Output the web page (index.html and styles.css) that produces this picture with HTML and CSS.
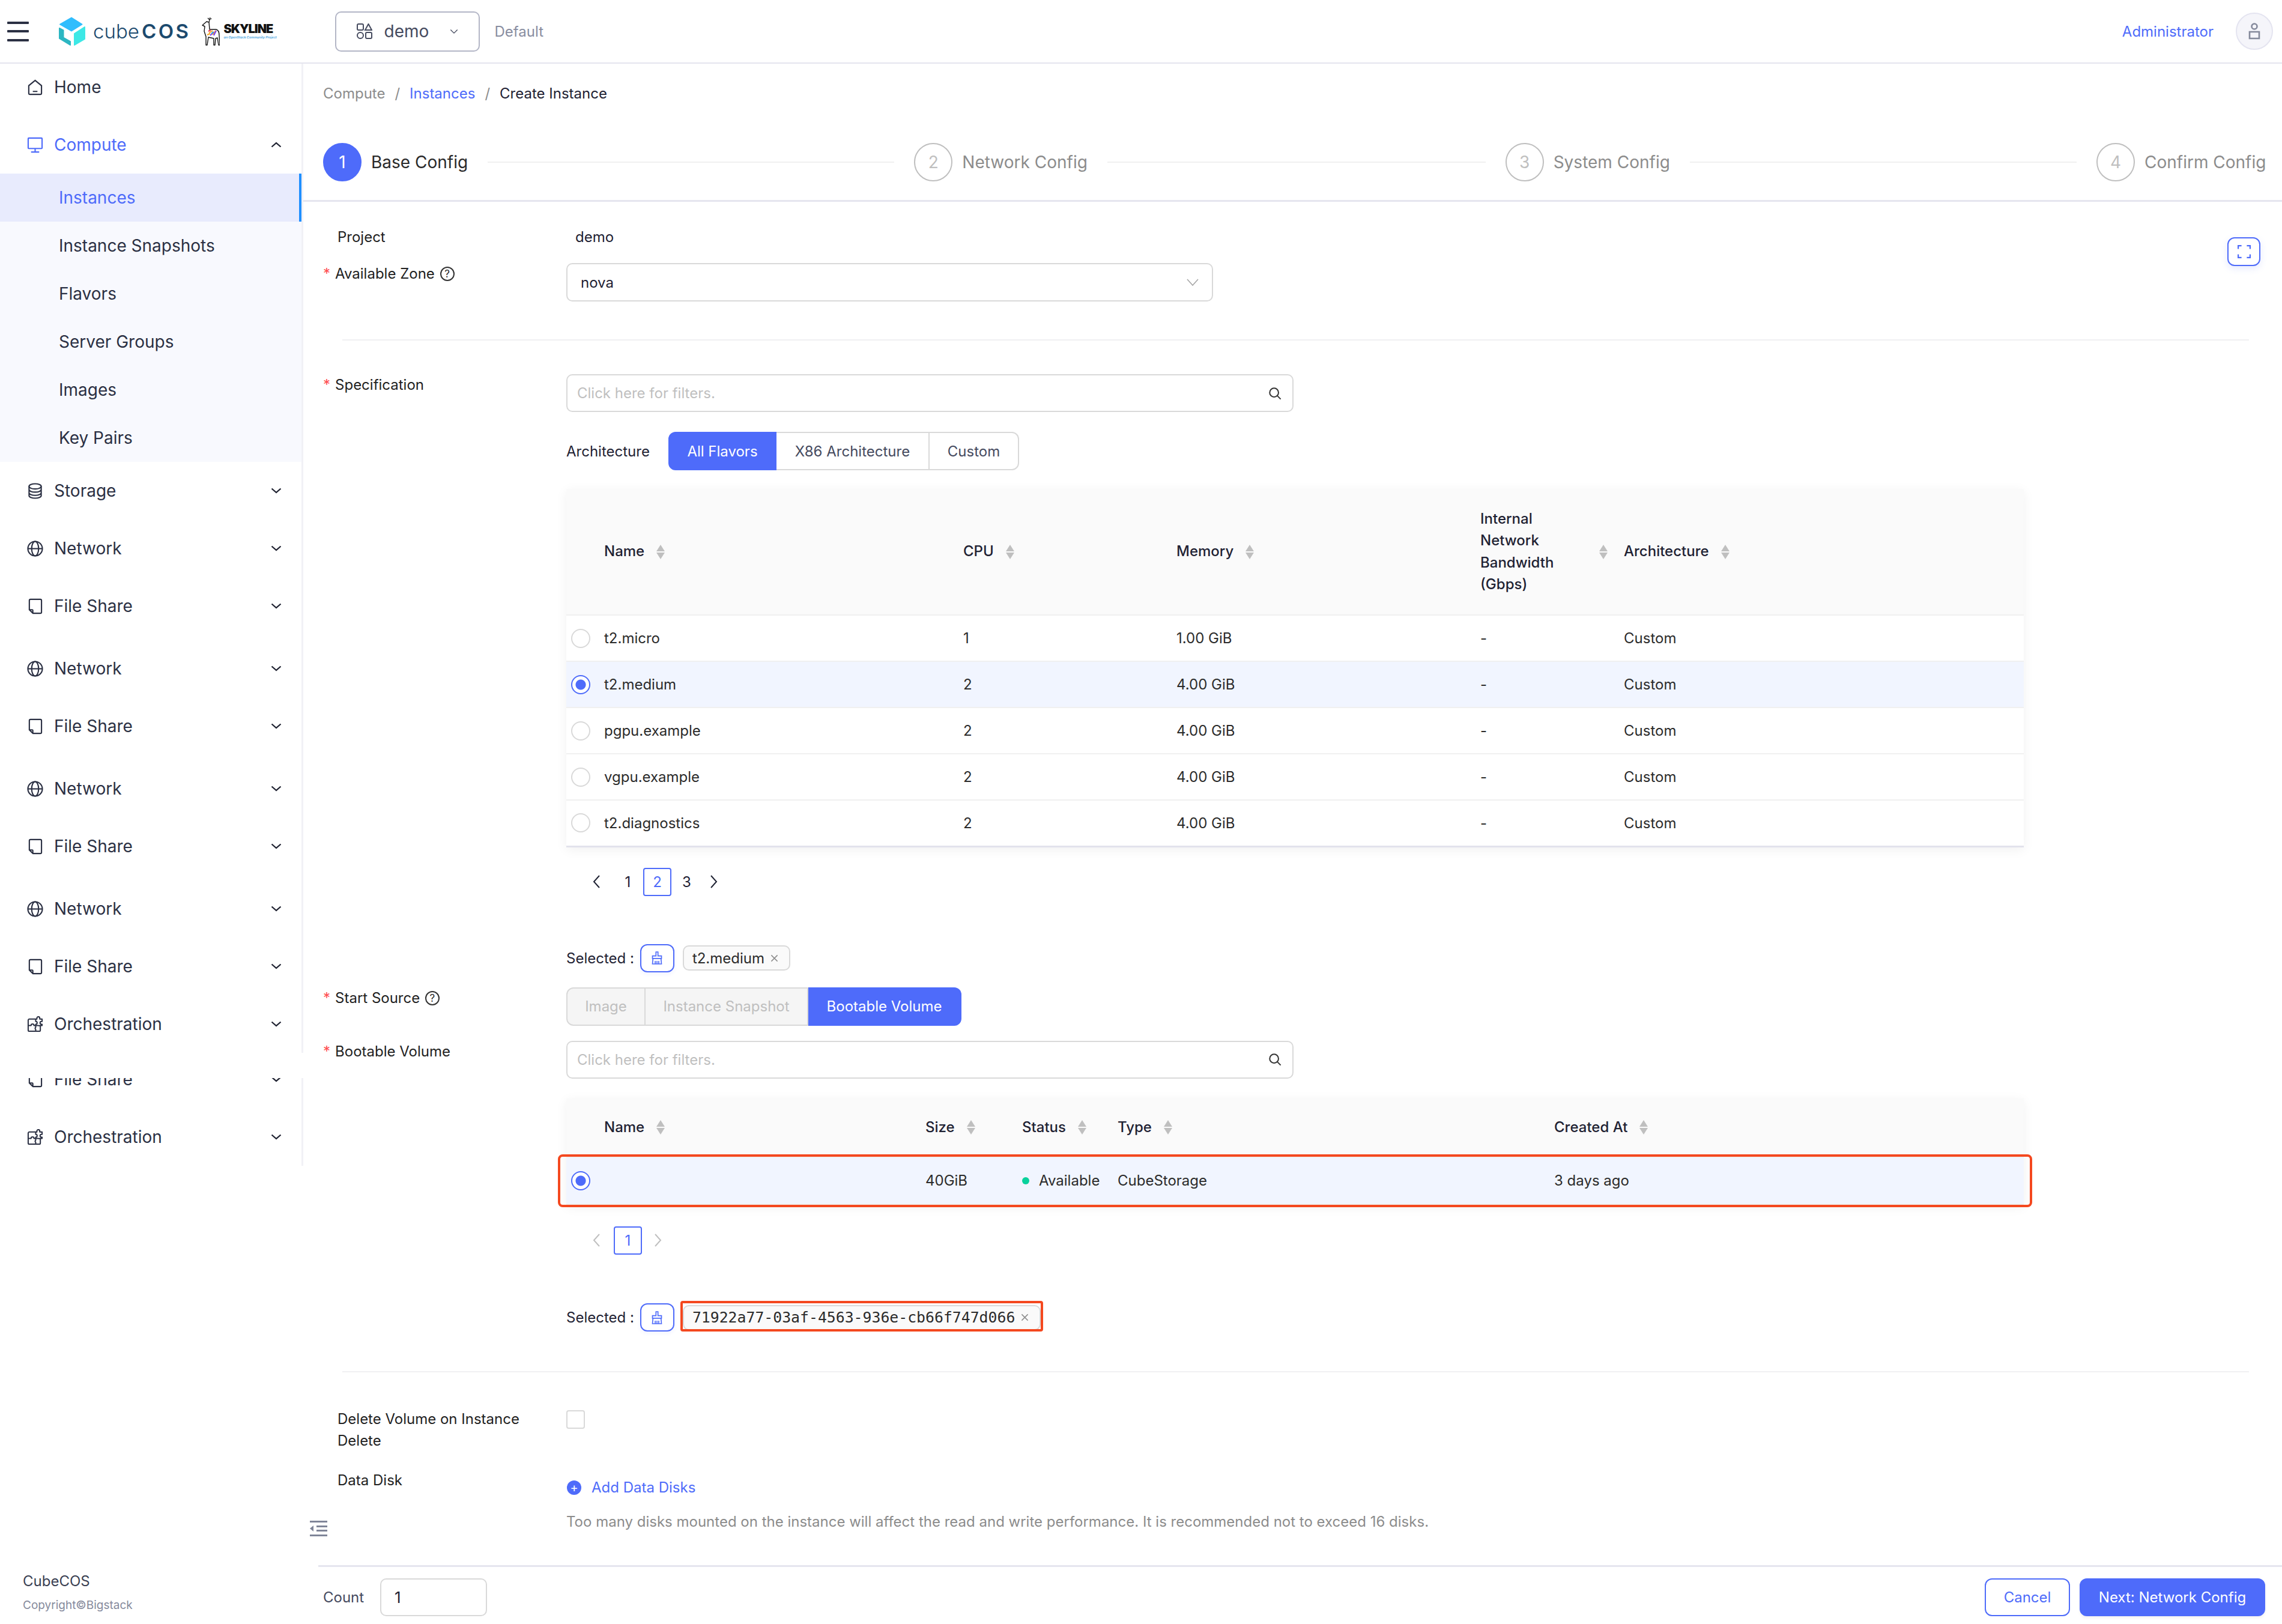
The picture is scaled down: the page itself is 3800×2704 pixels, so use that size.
FILE: index.html
```html
<!DOCTYPE html>
<html lang="en">
<head>
    <meta charset="UTF-8">
    <title>Create Instance</title>
    <link rel="stylesheet" href="styles.css">
</head>
<body>
    <svg class="sprites" width="0" height="0">
        <symbol id="i-chev" viewBox="0 0 18 10"><path d="M1.5 1.5 9 8l7.5-6.500" fill="none" stroke="currentColor" stroke-width="2.300"/></symbol>
        <symbol id="i-network" viewBox="0 0 28 28"><g fill="none" stroke="currentColor" stroke-width="2.200"><circle cx="14" cy="14" r="12.500"/><ellipse cx="14" cy="14" rx="6" ry="12.500"/><path d="M1.500 14h25"/></g></symbol>
        <symbol id="i-file" viewBox="0 0 26 28"><path d="M5 2h17a2 2 0 0 1 2 2v20a2 2 0 0 1-2 2H9l-6-6V4a2 2 0 0 1 2-2zM3 20h5a1 1 0 0 1 1 1v5" fill="none" stroke="currentColor" stroke-width="2.200" stroke-linejoin="round"/></symbol>
        <symbol id="i-storage" viewBox="0 0 26 28"><g fill="none" stroke="currentColor" stroke-width="2.200"><ellipse cx="13" cy="6" rx="10.500" ry="4.500"/><path d="M2.500 6v16c0 2.500 4.500 4.500 10.500 4.500s10.500-2 10.500-4.500V6M2.500 11.500c0 2.500 4.500 4.500 10.500 4.500s10.500-2 10.500-4.500M2.500 17c0 2.500 4.500 4.500 10.500 4.500s10.500-2 10.500-4.500"/></g></symbol>
        <symbol id="i-orch" viewBox="0 0 28 28"><path d="M15 5H4a2 2 0 0 0-2 2v17a2 2 0 0 0 2 2h17a2 2 0 0 0 2-2v-8M15 5h2V3.500a2.500 2.500 0 0 1 5 0V5h4v4h-1a2.500 2.500 0 0 0 0 5h1v2h-3l-3 .500M15 5v4a2.500 2.500 0 0 1 0 5v2h-3a2.500 2.500 0 0 0-5 0H2M15 16h5M15 16v3a2.500 2.500 0 0 0 0 4v3" fill="none" stroke="currentColor" stroke-width="2.100" stroke-linejoin="round"/></symbol>
        <symbol id="i-search" viewBox="0 0 24 24"><g fill="none" stroke="currentColor" stroke-width="2.200"><circle cx="10.500" cy="10.500" r="8"/><path d="m16.500 16.500 6 6"/></g></symbol>
        <symbol id="i-broom" viewBox="0 0 24 28"><path d="M10 2h4v8h7v5H3v-5h7zM4 15h16l1 11H3zM8.500 20v6M12 20v6M15.500 20v6" fill="none" stroke="currentColor" stroke-width="2"/></symbol>
        <symbol id="i-x" viewBox="0 0 14 14"><path d="m1.500 1.500 11 11m0-11-11 11" fill="none" stroke="currentColor" stroke-width="1.600"/></symbol>
    </svg>

    <header class="topbar">
        <div class="burger"><span></span><span></span><span></span></div>
        <svg class="logo-cube" viewBox="0 0 44 48">
            <g stroke-width="2" stroke-linejoin="round">
                <path d="M21 1.500 38.500 12.500 21 23.500 2 12.500z" fill="#31bdfd" stroke="#31bdfd"/>
                <path d="M1 19l6.500 3.500v12L19 41v6L1 36z" fill="#2cb6c2" stroke="#2cb6c2"/>
                <path d="M43 17 26 28v19l17-10z" fill="#3de8e6" stroke="#3de8e6"/>
            </g>
        </svg>
        <div class="logo-text">cube<b>COS</b></div>
        <svg class="logo-deer" viewBox="0 0 30 48">
            <path d="M12 9 14 1M13 5l-3-3M13.500 4l3-1" fill="none" stroke="#111" stroke-width="1.200"/>
            <path d="M1 14 8 8 12 9 13 21 24 21C28 22 29 26 29 31L30 47H28L26 35 23 36 22 47H20L20 36 11 34 9 47H7L7 33 4 24 5 16z" fill="#fff" stroke="#111" stroke-width="1.400" stroke-linejoin="round"/>
            <path d="M9 30l5-2M12 27l6-4M18 30l5-7" fill="none" stroke="#f5a623" stroke-width="2"/>
            <path d="M14 31l6-6M20 31l4-8" fill="none" stroke="#7b3ff2" stroke-width="2"/>
            <path d="M11 24l4-2" fill="none" stroke="#e8334a" stroke-width="2"/>
            <path d="M16 28l3-3" fill="none" stroke="#2ab5e8" stroke-width="2"/>
        </svg>
        <div class="logo-skyline">
            <div class="skyline-name">SKYLINE</div>
            <div class="skyline-sub">an OpenStack Community Project</div>
        </div>
        <div class="project-select">
            <svg class="project-icon" viewBox="0 0 26 26"><g fill="none" stroke="currentColor" stroke-width="2"><rect x="1" y="1" width="10" height="10" rx="2"/><path d="M19.500 1 25 11H14z"/><circle cx="6" cy="20" r="5"/><rect x="15" y="15" width="10" height="10" rx="2"/></g></svg>
            <span>demo</span>
            <svg class="project-chev" viewBox="0 0 16 10"><path d="M1.500 1.500 8 8l6.500-6.500" fill="none" stroke="currentColor" stroke-width="1.500"/></svg>
        </div>
        <span class="project-domain">Default</span>
        <a class="user-name">Administrator</a>
        <div class="avatar">
            <svg viewBox="0 0 24 28"><g fill="none" stroke="currentColor" stroke-width="2.600"><circle cx="12" cy="6" r="4.500"/><path d="M4 15h16v11H4z"/></g></svg>
        </div>
    </header>

    <div class="layout">
        <aside class="sidebar">
            <nav class="nav-part">
                <div class="nav-item home">
                    <svg class="nav-icon" viewBox="0 0 28 28"><path d="M14 2 25 11v13a2 2 0 0 1-2 2H5a2 2 0 0 1-2-2V11zM10 21h8" fill="none" stroke="currentColor" stroke-width="2.200"/></svg>
                    <span>Home</span>
                </div>
                <div class="nav-item active">
                    <svg class="nav-icon" viewBox="0 0 28 28"><path d="M3 2h22a1 1 0 0 1 1 1v16a1 1 0 0 1-1 1H3a1 1 0 0 1-1-1V3a1 1 0 0 1 1-1zM14 20v6M7 26h14" fill="none" stroke="currentColor" stroke-width="2.200"/></svg>
                    <span>Compute</span>
                    <svg class="nav-chev up"><use href="#i-chev"/></svg>
                </div>
                <ul class="sub-list">
                    <li class="sub-item current">Instances</li>
                    <li class="sub-item">Instance Snapshots</li>
                    <li class="sub-item">Flavors</li>
                    <li class="sub-item">Server Groups</li>
                    <li class="sub-item">Images</li>
                    <li class="sub-item">Key Pairs</li>
                </ul>
                <div class="nav-item"><svg class="nav-icon"><use href="#i-storage"/></svg><span>Storage</span><svg class="nav-chev"><use href="#i-chev"/></svg></div>
                <div class="nav-item"><svg class="nav-icon"><use href="#i-network"/></svg><span>Network</span><svg class="nav-chev"><use href="#i-chev"/></svg></div>
                <div class="nav-item"><svg class="nav-icon"><use href="#i-file"/></svg><span>File Share</span><svg class="nav-chev"><use href="#i-chev"/></svg></div>
                <div class="nav-item group"><svg class="nav-icon"><use href="#i-network"/></svg><span>Network</span><svg class="nav-chev"><use href="#i-chev"/></svg></div>
                <div class="nav-item"><svg class="nav-icon"><use href="#i-file"/></svg><span>File Share</span><svg class="nav-chev"><use href="#i-chev"/></svg></div>
                <div class="nav-item group"><svg class="nav-icon"><use href="#i-network"/></svg><span>Network</span><svg class="nav-chev"><use href="#i-chev"/></svg></div>
                <div class="nav-item"><svg class="nav-icon"><use href="#i-file"/></svg><span>File Share</span><svg class="nav-chev"><use href="#i-chev"/></svg></div>
                <div class="nav-item group"><svg class="nav-icon"><use href="#i-network"/></svg><span>Network</span><svg class="nav-chev"><use href="#i-chev"/></svg></div>
                <div class="nav-item"><svg class="nav-icon"><use href="#i-file"/></svg><span>File Share</span><svg class="nav-chev"><use href="#i-chev"/></svg></div>
                <div class="nav-item"><svg class="nav-icon"><use href="#i-orch"/></svg><span>Orchestration</span><svg class="nav-chev"><use href="#i-chev"/></svg></div>
            </nav>
            <nav class="nav-part second">
                <div class="nav-clip">
                    <div class="nav-item"><svg class="nav-icon"><use href="#i-file"/></svg><span>File Share</span><svg class="nav-chev"><use href="#i-chev"/></svg></div>
                </div>
                <div class="nav-item"><svg class="nav-icon"><use href="#i-orch"/></svg><span>Orchestration</span><svg class="nav-chev"><use href="#i-chev"/></svg></div>
            </nav>
            <div class="side-foot">
                <div class="side-brand">CubeCOS</div>
                <div class="side-copy">Copyright©Bigstack</div>
            </div>
            <svg class="collapse-btn" viewBox="0 0 29 26"><path d="M0 1.500h29M11 9.500h18M11 16.500h18M0 24.500h29" fill="none" stroke="currentColor" stroke-width="3"/><path d="M0 13 6 8v10z" fill="currentColor"/></svg>
        </aside>

        <main class="main">
            <div class="crumbs">
                <span class="crumb-muted">Compute</span><i>/</i>
                <a class="crumb-link">Instances</a><i>/</i>
                <span>Create Instance</span>
            </div>

            <div class="steps">
                <div class="step on"><span class="step-num">1</span><span class="step-title">Base Config</span><span class="step-line"></span></div>
                <div class="step"><span class="step-num">2</span><span class="step-title">Network Config</span><span class="step-line"></span></div>
                <div class="step"><span class="step-num">3</span><span class="step-title">System Config</span><span class="step-line"></span></div>
                <div class="step last"><span class="step-num">4</span><span class="step-title">Confirm Config</span></div>
            </div>

            <div class="form">
                <button class="fullscreen-btn">
                    <svg viewBox="0 0 20 20"><path d="M1 6V1h5M14 1h5v5M19 14v5h-5M6 19H1v-5" fill="none" stroke="currentColor" stroke-width="2"/></svg>
                </button>

                <div class="row row-project">
                    <div class="label plain">Project</div>
                    <div class="value">demo</div>
                </div>

                <div class="row row-zone">
                    <div class="label req">Available Zone <span class="help">?</span></div>
                    <div class="select">
                        <span>nova</span>
                        <svg viewBox="0 0 20 12"><path d="M1 1l9 10 9-10" fill="none" stroke="currentColor" stroke-width="1.600"/></svg>
                    </div>
                </div>

                <hr class="divider">

                <div class="row">
                    <div class="label req">Specification</div>
                    <div class="field">
                        <div class="search-box"><span>Click here for filters.</span><svg><use href="#i-search"/></svg></div>
                        <div class="arch-row">
                            <span class="arch-label">Architecture</span>
                            <div class="seg">
                                <span class="seg-btn sel w-all">All Flavors</span>
                                <span class="seg-btn w-x86">X86 Architecture</span>
                                <span class="seg-btn w-cus">Custom</span>
                            </div>
                        </div>
                        <table class="grid grid-flavor">
                            <colgroup><col class="c-radio"><col class="c-fname"><col class="c-cpu"><col class="c-mem"><col class="c-bw"><col class="c-arch"></colgroup>
                            <thead>
                                <tr>
                                    <th></th>
                                    <th><div class="th"><span>Name</span><b class="sort"></b></div></th>
                                    <th><div class="th"><span>CPU</span><b class="sort"></b></div></th>
                                    <th><div class="th"><span>Memory</span><b class="sort"></b></div></th>
                                    <th><div class="th between"><span>Internal Network Bandwidth (Gbps)</span><b class="sort"></b></div></th>
                                    <th><div class="th"><span>Architecture</span><b class="sort"></b></div></th>
                                </tr>
                            </thead>
                            <tbody>
                                <tr><td><i class="radio"></i></td><td>t2.micro</td><td>1</td><td>1.00 GiB</td><td>-</td><td>Custom</td></tr>
                                <tr class="picked"><td><i class="radio on"></i></td><td>t2.medium</td><td>2</td><td>4.00 GiB</td><td>-</td><td>Custom</td></tr>
                                <tr><td><i class="radio"></i></td><td>pgpu.example</td><td>2</td><td>4.00 GiB</td><td>-</td><td>Custom</td></tr>
                                <tr><td><i class="radio"></i></td><td>vgpu.example</td><td>2</td><td>4.00 GiB</td><td>-</td><td>Custom</td></tr>
                                <tr><td><i class="radio"></i></td><td>t2.diagnostics</td><td>2</td><td>4.00 GiB</td><td>-</td><td>Custom</td></tr>
                            </tbody>
                        </table>
                        <div class="pager">
                            <svg class="pg-arrow"><path d="M11 2 2 12l9 10" fill="none" stroke="currentColor" stroke-width="2"/></svg>
                            <span class="pg-num">1</span>
                            <span class="pg-num cur">2</span>
                            <span class="pg-num">3</span>
                            <svg class="pg-arrow next"><path d="M2 2l9 10-9 10" fill="none" stroke="currentColor" stroke-width="2"/></svg>
                        </div>
                        <div class="selected">
                            <span>Selected :</span>
                            <span class="clear-btn"><svg><use href="#i-broom"/></svg></span>
                            <span class="chip">t2.medium<svg><use href="#i-x"/></svg></span>
                        </div>
                    </div>
                </div>

                <div class="row row-source">
                    <div class="label req">Start Source <span class="help">?</span></div>
                    <div class="seg">
                        <span class="seg-btn off w-img">Image</span>
                        <span class="seg-btn off w-snap">Instance Snapshot</span>
                        <span class="seg-btn sel w-boot">Bootable Volume</span>
                    </div>
                </div>

                <div class="row row-volume">
                    <div class="label req">Bootable Volume</div>
                    <div class="field">
                        <div class="search-box"><span>Click here for filters.</span><svg><use href="#i-search"/></svg></div>
                        <div class="grid-wrap">
                            <table class="grid grid-volume">
                                <colgroup><col class="c-radio"><col class="c-vname"><col class="c-size"><col class="c-status"><col class="c-type"><col class="c-created"></colgroup>
                                <thead>
                                    <tr>
                                        <th></th>
                                        <th><div class="th"><span>Name</span><b class="sort"></b></div></th>
                                        <th><div class="th"><span>Size</span><b class="sort"></b></div></th>
                                        <th><div class="th"><span>Status</span><b class="sort"></b></div></th>
                                        <th><div class="th"><span>Type</span><b class="sort"></b></div></th>
                                        <th><div class="th"><span>Created At</span><b class="sort"></b></div></th>
                                    </tr>
                                </thead>
                                <tbody>
                                    <tr class="picked"><td><i class="radio on"></i></td><td></td><td>40GiB</td><td class="status"><i class="dot"></i>Available</td><td>CubeStorage</td><td>3 days ago</td></tr>
                                </tbody>
                            </table>
                            <div class="row-mark"></div>
                        </div>
                        <div class="pager single">
                            <svg class="pg-arrow dim"><path d="M11 2 2 12l9 10" fill="none" stroke="currentColor" stroke-width="2"/></svg>
                            <span class="pg-num cur">1</span>
                            <svg class="pg-arrow dim"><path d="M2 2l9 10-9 10" fill="none" stroke="currentColor" stroke-width="2"/></svg>
                        </div>
                        <div class="selected second">
                            <span>Selected :</span>
                            <span class="clear-btn"><svg><use href="#i-broom"/></svg></span>
                            <span class="chip mark-chip">71922a77-03af-4563-936e-cb66f747d066<svg><use href="#i-x"/></svg></span>
                        </div>
                    </div>
                </div>

                <hr class="divider lower">

                <div class="row row-delete">
                    <div class="label plain">Delete Volume on Instance Delete</div>
                    <i class="checkbox"></i>
                </div>

                <div class="row row-disk">
                    <div class="label plain">Data Disk</div>
                    <div class="field">
                        <a class="add-link"><span class="add-icon">+</span>Add Data Disks</a>
                        <p class="hint">Too many disks mounted on the instance will affect the read and write performance. It is recommended not to exceed 16 disks.</p>
                    </div>
                </div>
            </div>

            <footer class="footer">
                <span class="count-label">Count</span>
                <div class="count-input">1</div>
                <div class="footer-right">
                    <button class="btn btn-ghost">Cancel</button>
                    <button class="btn btn-primary">Next: Network Config</button>
                </div>
            </footer>
        </main>
    </div>
</body>
</html>
```

FILE: styles.css
```css
* {
    box-sizing: border-box;
}

html, body {
    margin: 0;
    padding: 0;
}

body {
    width: 3800px;
    height: 2704px;
    overflow: hidden;
    background: #fff;
    color: #1f2233;
    font-family: Inter, "Liberation Sans", sans-serif;
    font-size: 24px;
}

.sprites {
    position: absolute;
}

/* top bar */
.topbar {
    height: 106px;
    display: flex;
    align-items: center;
    border-bottom: 2px solid #e4e4ee;
    padding-right: 15px;
}

.burger {
    width: 36px;
    height: 33px;
    margin-left: 12px;
    display: flex;
    flex-direction: column;
    justify-content: space-between;
}

.burger span {
    height: 4px;
    background: #2b3043;
    border-radius: 1px;
}

.logo-cube {
    width: 44px;
    height: 48px;
    margin-left: 50px;
}

.logo-text {
    margin-left: 13px;
    font-size: 33px;
    font-weight: 300;
    color: #1c4a6e;
    white-space: nowrap;
}

.logo-text b {
    font-weight: 600;
    margin-left: 4px;
    letter-spacing: 3.500px;
}

.logo-deer {
    width: 30px;
    height: 48px;
    margin-left: 18px;
}

.logo-skyline {
    margin-left: 7px;
    width: 91px;
}

.skyline-name {
    font-weight: 900;
    font-size: 20px;
    line-height: 20px;
    color: #111;
    letter-spacing: -1px;
}

.skyline-sub {
    font-size: 5.400px;
    font-style: italic;
    font-weight: 600;
    line-height: 8px;
    color: #3ea0dc;
    white-space: nowrap;
}

.project-select {
    width: 241px;
    height: 67px;
    margin-left: 94px;
    border: 2px solid #b3b6c6;
    border-radius: 10px;
    display: flex;
    align-items: center;
    padding-left: 34px;
    font-size: 28px;
    color: #454a5e;
}

.project-icon {
    width: 26px;
    height: 26px;
    margin-right: 20px;
}

.project-chev {
    width: 14px;
    height: 9px;
    margin-left: 35px;
}

.project-domain {
    margin-left: 25px;
    color: #888da0;
}

.user-name {
    margin-left: auto;
    color: #4e6bfa;
}

.avatar {
    width: 62px;
    height: 62px;
    margin-left: 37px;
    border: 2px solid #e4e4f0;
    border-radius: 50%;
    background: #f5f5fa;
    color: #858a9c;
    display: flex;
    align-items: center;
    justify-content: center;
}

.avatar svg {
    width: 24px;
    height: 28px;
}

.layout {
    display: flex;
    height: 2598px;
}

/* side menu */
.sidebar {
    width: 505px;
    flex: none;
    position: relative;
}

.nav-part {
    border-right: 3px solid #f1f1f6;
    height: 1647px;
}

.nav-part.second {
    height: 146px;
    margin-top: 42px;
}

.nav-item {
    height: 96px;
    display: flex;
    align-items: center;
    padding: 0 33px 0 45px;
    font-size: 28px;
    color: #2b3043;
}

.nav-item.home {
    height: 78px;
    margin-bottom: 9px;
}

.nav-item.group {
    margin-top: 8px;
}

.nav-item.active {
    color: #4e6bfa;
}

.nav-clip {
    height: 50px;
    overflow: hidden;
    display: flex;
    align-items: flex-end;
}

.nav-clip .nav-item {
    flex: 1;
    flex-shrink: 0;
}

.nav-icon {
    width: 27px;
    height: 27px;
    margin-right: 18px;
    flex: none;
}

.nav-chev {
    width: 18px;
    height: 10px;
    margin-left: auto;
    color: #1e2130;
}

.nav-chev.up {
    transform: rotate(180deg);
}

.sub-list {
    list-style: none;
    margin: 0;
    padding: 0;
    background: #f8f9fe;
}

.sub-item {
    height: 80px;
    line-height: 80px;
    padding-left: 98px;
    font-size: 28px;
    color: #2b3043;
}

.sub-item.current {
    background: #e8ebfd;
    color: #4e6bfa;
    border-right: 4px solid #1f8fff;
}

.side-foot {
    position: absolute;
    left: 38px;
    bottom: 20px;
}

.side-brand {
    font-size: 24px;
    color: #3a3f52;
    margin-bottom: 14px;
}

.side-copy {
    font-size: 19px;
    color: #858a9c;
}

.collapse-btn {
    position: absolute;
    left: 516px;
    top: 2426px;
    width: 29px;
    height: 26px;
    color: #7f8598;
}

/* main column */
.main {
    flex: 1;
    min-width: 0;
    display: flex;
    flex-direction: column;
}

.crumbs {
    height: 98px;
    padding-left: 33px;
    display: flex;
    align-items: center;
    font-size: 24px;
}

.crumbs i {
    font-style: normal;
    color: #8c8c8c;
    margin: 0 16px;
}

.crumb-muted {
    color: #8c8c8c;
}

.crumb-link {
    color: #4e6bfa;
}

.steps {
    display: flex;
    padding: 34px 28px 31px 33px;
    border-bottom: 3px solid #e5e5ef;
}

.step {
    flex: 1;
    display: flex;
    align-items: center;
    height: 64px;
    color: #8c8c8c;
}

.step.last {
    flex: none;
    width: 281px;
}

.step-num {
    width: 64px;
    height: 64px;
    flex: none;
    border: 2px solid #bfbfbf;
    border-radius: 50%;
    display: flex;
    align-items: center;
    justify-content: center;
    font-size: 28px;
    color: #bfbfbf;
}

.step.on .step-num {
    background: #4e6bfa;
    border-color: #4e6bfa;
    color: #fff;
}

.step.on {
    color: #2a2a2a;
}

.step-title {
    margin-left: 16px;
    font-size: 28px;
    white-space: nowrap;
}

.step-line {
    flex: 1;
    height: 2px;
    margin: 0 33px;
    background: #f0f0f0;
}

/* form */
.form {
    flex: 1;
    position: relative;
    padding: 41px 55px 0 33px;
    min-height: 0;
}

.fullscreen-btn {
    position: absolute;
    top: 59px;
    left: 3204px;
    width: 55px;
    height: 48px;
    padding: 0;
    background: #fff;
    border: 2px solid #4e6bfa;
    border-radius: 12px;
    color: #4e6bfa;
    box-shadow: 0 4px 12px rgba(78, 107, 250, 0.15);
    display: flex;
    align-items: center;
    justify-content: center;
}

.fullscreen-btn svg {
    width: 22px;
    height: 22px;
}

.row {
    display: flex;
    align-items: flex-start;
}

.label {
    width: 405px;
    flex: none;
    line-height: 36px;
    color: #222;
}

.label.req::before {
    content: "*";
    color: #ff4d4f;
    margin-right: 8px;
}

.label.plain {
    padding-left: 24px;
    padding-right: 40px;
}

.help {
    display: inline-block;
    width: 24px;
    height: 24px;
    margin-left: 2px;
    border: 2px solid #333;
    border-radius: 50%;
    font-size: 17px;
    line-height: 20px;
    text-align: center;
    vertical-align: 2px;
}

.value {
    padding-left: 15px;
    line-height: 36px;
}

.row-zone {
    margin-top: 25px;
}

.select {
    width: 1077px;
    height: 64px;
    border: 2px solid #d9d9d9;
    border-radius: 10px;
    display: flex;
    align-items: center;
    justify-content: space-between;
    padding: 0 22px;
}

.select svg {
    width: 20px;
    height: 12px;
    color: #a6a6a6;
}

.divider {
    margin: 63px 0 56px 32px;
    border: 0;
    height: 2px;
    background: #f0f0f2;
}

.divider.lower {
    margin: 65px 0 60px 32px;
}

.field {
    flex: 1;
    min-width: 0;
}

.search-box {
    width: 1211px;
    height: 63px;
    border: 2px solid #d9d9d9;
    border-radius: 10px;
    display: flex;
    align-items: center;
    justify-content: space-between;
    padding: 0 18px 0 16px;
    color: #bfbfbf;
}

.search-box svg {
    width: 22px;
    height: 22px;
    color: #333;
}

.arch-row {
    display: flex;
    align-items: center;
    margin-top: 33px;
}

.arch-label {
    width: 170px;
}

.seg {
    display: flex;
    height: 64px;
}

.seg-btn {
    display: flex;
    align-items: center;
    justify-content: center;
    border: 2px solid #d9d9d9;
    border-left-width: 0;
    color: #454a5e;
}

.seg-btn:first-child {
    border-left-width: 2px;
    border-radius: 12px 0 0 12px;
}

.seg-btn:last-child {
    border-radius: 0 12px 12px 0;
}

.seg-btn.sel {
    background: #4e6bfa;
    border-color: #4e6bfa;
    color: #fff;
}

.seg-btn.off {
    background: #f5f5f5;
    color: #bfbfbf;
}

.w-all { width: 180px; }
.w-x86 { width: 255px; }
.w-cus { width: 149px; }
.w-img { width: 132px; }
.w-snap { width: 271px; }
.w-boot { width: 255px; }

/* tables */
.grid {
    width: 2427px;
    table-layout: fixed;
    border-collapse: collapse;
    margin-top: 31px;
    box-shadow: 0 4px 18px rgba(0, 0, 0, 0.06);
}

.grid-wrap {
    position: relative;
    width: 2427px;
    margin-top: 33px;
}

.grid-volume {
    margin-top: 0;
}

.c-radio { width: 46px; }
.c-fname { width: 598px; }
.c-cpu { width: 355px; }
.c-mem { width: 506px; }
.c-bw { width: 239px; }
.c-arch { width: 683px; }
.c-vname { width: 535px; }
.c-size { width: 161px; }
.c-status { width: 159px; }
.c-type { width: 727px; }
.c-created { width: 799px; }

.grid th {
    height: 210px;
    background: #fafafa;
    padding: 0 10px 0 17px;
    font-weight: 500;
    text-align: left;
    line-height: 36.500px;
    border-bottom: 2px solid #f0f0f0;
}

.grid-volume th {
    height: 98px;
}

.th {
    display: flex;
    align-items: center;
    gap: 20px;
}

.th.between {
    justify-content: space-between;
    gap: 0;
}

.th.between span {
    width: 160px;
}

.sort {
    flex: none;
    display: flex;
    flex-direction: column;
    gap: 2px;
}

.sort::before,
.sort::after {
    content: "";
    display: block;
    width: 0;
    height: 0;
    border-left: 7.500px solid transparent;
    border-right: 7.500px solid transparent;
}

.sort::before {
    border-bottom: 11px solid #bfbfbf;
}

.sort::after {
    border-top: 11px solid #bfbfbf;
}

.grid td {
    height: 77px;
    padding: 0 17px;
    color: #2b2b2b;
    border-bottom: 2px solid #f0f0f0;
}

.grid td:first-child,
.grid th:first-child {
    padding: 0 0 0 8px;
}

.grid-flavor tbody tr:last-child td {
    border-bottom: 3px solid #e2e2ec;
}

.picked td {
    background: #f1f5ff;
}

.grid-volume td {
    height: 78px;
}

.grid td.status {
    white-space: nowrap;
}

.row-mark {
    position: absolute;
    left: -14px;
    right: -14px;
    bottom: -4px;
    height: 88px;
    border: 4px solid #f4481f;
    border-radius: 8px;
}

.radio {
    display: block;
    width: 32px;
    height: 32px;
    border: 2px solid #d9d9d9;
    border-radius: 50%;
    background: #fff;
}

.radio.on {
    border-color: #4e6bfa;
    background: radial-gradient(circle, #4e6bfa 0 8px, #fff 9px);
}

.dot {
    display: inline-block;
    width: 12px;
    height: 12px;
    margin-right: 16px;
    border-radius: 50%;
    background: #09d19d;
    vertical-align: 2px;
}

/* pagination */
.pager {
    display: flex;
    align-items: center;
    margin-top: 34px;
    height: 47px;
    padding-left: 44px;
}

.pg-arrow {
    width: 13px;
    height: 24px;
}

.pg-arrow.dim {
    color: #bfbfbf;
}

.pg-num {
    width: 47px;
    height: 47px;
    display: flex;
    align-items: center;
    justify-content: center;
    margin-left: 2px;
}

.pg-num:first-of-type {
    margin-left: 22px;
}

.pg-num.cur {
    border: 2px solid #4e6bfa;
    border-radius: 4px;
    color: #4e6bfa;
    margin-left: 2px;
}

.pg-arrow.next {
    margin-left: 15px;
}

.pager.single .pg-num {
    margin: 0 20px 0 22px;
}

.pager.single {
    margin-top: 36px;
}

.selected {
    display: flex;
    align-items: center;
    margin-top: 80px;
    height: 47px;
}

.selected.second {
    margin-top: 81px;
    height: 48px;
}

.clear-btn {
    width: 57px;
    height: 47px;
    margin: 0 14px 0 10px;
    border: 2px solid #4e6bfa;
    border-radius: 12px;
    color: #4e6bfa;
    display: flex;
    align-items: center;
    justify-content: center;
    box-shadow: 0 3px 6px rgba(78, 107, 250, 0.08);
}

.clear-btn svg {
    width: 20px;
    height: 24px;
}

.chip {
    height: 42px;
    padding: 0 18px 0 14px;
    background: #fafafa;
    border: 2px solid #d9d9d9;
    border-radius: 10px;
    display: flex;
    align-items: center;
    position: relative;
    color: #2b2b2b;
}

.chip svg {
    width: 13px;
    height: 13px;
    margin-left: 10px;
    color: #8c8c8c;
}

.mark-chip {
    font-family: "DejaVu Sans Mono", monospace;
    font-size: 24.800px;
}

.mark-chip::after {
    content: "";
    position: absolute;
    top: -9px;
    bottom: -4px;
    left: -6px;
    right: -6px;
    border: 4px solid #f4481f;
    border-radius: 4px;
}

.row-source {
    margin-top: 25px;
}

.row-volume {
    margin-top: 25px;
}

.checkbox {
    display: block;
    width: 31px;
    height: 31px;
    margin-top: 3px;
    border: 2px solid #d9d9d9;
    border-radius: 4px;
}

.row-disk {
    margin-top: 30px;
}

.add-link {
    display: flex;
    align-items: center;
    height: 36px;
    margin-top: 12px;
    color: #4e6bfa;
}

.add-icon {
    width: 24px;
    height: 24px;
    margin: 0 17px 0 1px;
    border-radius: 50%;
    background: #4e6bfa;
    color: #fff;
    font-size: 20px;
    line-height: 24px;
    text-align: center;
}

.hint {
    margin: 21px 0 0;
    line-height: 36px;
    color: #8c8c8c;
    white-space: nowrap;
}

/* bottom bar */
.footer {
    height: 98px;
    flex: none;
    margin-left: 25px;
    padding: 19px 28px 0 8px;
    border-top: 3px solid #e5e5ef;
    display: flex;
    align-items: flex-start;
}

.count-label {
    width: 95px;
    line-height: 63px;
    color: #454a5e;
}

.count-input {
    width: 178px;
    height: 63px;
    padding-left: 22px;
    line-height: 59px;
    border: 2px solid #d9d9d9;
    border-radius: 10px;
    font-size: 26px;
}

.footer-right {
    margin-left: auto;
    display: flex;
    gap: 16px;
}

.btn {
    height: 63px;
    border-radius: 12px;
    font: inherit;
    padding: 0;
}

.btn-ghost {
    width: 142px;
    background: #fff;
    border: 2px solid #4e6bfa;
    color: #4e6bfa;
}

.btn-primary {
    width: 309px;
    background: #4e6bfa;
    border: 2px solid #4e6bfa;
    color: #fff;
    box-shadow: 0 3px 4px rgba(0, 0, 0, 0.05);
}
```
